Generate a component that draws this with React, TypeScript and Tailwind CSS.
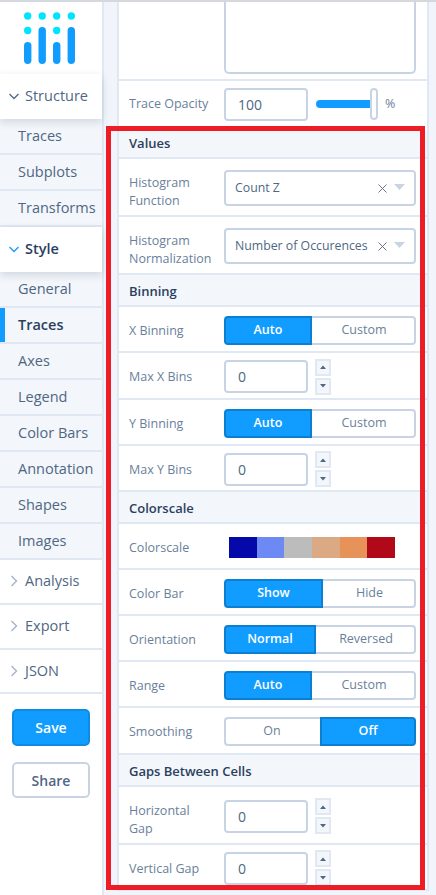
import React from "react";

const font = { fontFamily: '"Open Sans", sans-serif' };

function Chevron({ open, blue }: { open?: boolean; blue?: boolean }) {
  return (
    <svg width="12" height="12" viewBox="0 0 12 12" fill="none" className="shrink-0">
      {open ? (
        <path d="M1.5 4 L6 8.5 L10.5 4" stroke={blue ? "#119dff" : "#506784"} strokeWidth="1.3" />
      ) : (
        <path d="M3.5 1 L8.5 6 L3.5 11" stroke="#a2b1c6" strokeWidth="1.3" />
      )}
    </svg>
  );
}

function NavHead({ label, h, open, blue, shadow, up }: { label: string; h: string; open?: boolean; blue?: boolean; shadow?: boolean; up?: boolean }) {
  return (
    <div
      className={`flex items-center gap-[5px] pl-[8px] bg-white text-[14.5px] relative ${h} ${
        shadow ? "shadow-[0_3px_8px_rgba(80,103,132,0.22)] z-10 pb-[2px]" : "border-b-2 border-[#dfe8f3]"
      } ${up ? "pb-[2px]" : ""} ${blue ? "font-semibold text-[#2a3f5f]" : "text-[#506784]"}`}
    >
      <Chevron open={open} blue={blue} />
      <span>{label}</span>
    </div>
  );
}

function NavItem({ label, active }: { label: string; active?: boolean }) {
  return (
    <div
      className={`h-[36px] flex items-center pl-[18px] text-[14.5px] border-b-2 border-[#dfe8f3] relative ${
        active ? "font-semibold text-[#2a3f5f] bg-[#f3f6fa]" : "text-[#506784] bg-[#f3f6fa]"
      }`}
    >
      {active && <div className="absolute left-0 top-0 bottom-0 w-[5px] bg-[#119dff]" />}
      {label}
    </div>
  );
}

function Header({ label, first }: { label: string; first?: boolean }) {
  return (
    <div
      className={`flex items-center pl-[10px] bg-[#f3f6fa] border-b-2 border-[#dfe8f3] text-[13px] font-semibold text-[#2a3f5f] ${
        first ? "h-[28px]" : "h-[32px] pt-[4px]"
      }`}
    >
      {label}
    </div>
  );
}

function Row({ label, h = "h-[46px]", two, children }: { label: React.ReactNode; h?: string; two?: boolean; children: React.ReactNode }) {
  return (
    <div className={`${h} pt-[2px] flex items-center border-b-2 border-[#dfe8f3] bg-white`}>
      <div className={`w-[105px] pl-[10px] text-[12.5px] text-[#6a7f9b] shrink-0 ${two ? "leading-[18px] pt-[7px]" : "leading-[19px]"}`}>{label}</div>
      <div className="flex-1 flex items-center">{children}</div>
    </div>
  );
}

function Toggle({ left, right, leftW, active = "left" }: { left: string; right: string; leftW: string; active?: "left" | "right" }) {
  const on = "bg-[#119dff] text-white font-semibold border-[#0d7fd0]";
  const off = "bg-white text-[#6a7f9b] border-[#c8d4e3]";
  return (
    <div className="w-[192px] h-[29px] flex text-[12.5px]">
      <div className={`${leftW} flex items-center justify-center border-2 rounded-l-[4px] ${active === "left" ? on : off} ${active === "left" ? "" : "border-r-0 pr-[2px]"}`}>
        {left}
      </div>
      <div className={`flex-1 flex items-center justify-center border-2 rounded-r-[4px] ${active === "right" ? on : off} ${active === "right" ? "" : "border-l-0 pl-[2px]"}`}>
        {right}
      </div>
    </div>
  );
}

function Spin({ up }: { up?: boolean }) {
  return (
    <div className="w-[16px] h-[17px] bg-[#f3f6fa] border-2 border-[#dfe8f3] flex items-center justify-center">
      <svg width="6" height="4" viewBox="0 0 6 4">
        <path d={up ? "M0 4 L3 0.5 L6 4 Z" : "M0 0 L3 3.5 L6 0 Z"} fill="#506784" />
      </svg>
    </div>
  );
}

function NumberField() {
  return (
    <div className="flex items-center gap-[7px]">
      <div className="w-[84px] h-[33px] border-2 border-[#c8d4e3] rounded-[4px] bg-white flex items-center pl-[12px] text-[14px] text-[#506784]">0</div>
      <div className="flex flex-col gap-[2px]">
        <Spin up />
        <Spin />
      </div>
    </div>
  );
}

function Select({ value }: { value: string }) {
  return (
    <div className="w-[192px] h-[36px] border-2 border-[#c8d4e3] rounded-[4px] bg-white flex items-center pl-[9px] pr-[9px] text-[12.3px] text-[#506784]">
      <span className="flex-1 whitespace-nowrap">{value}</span>
      <svg width="9" height="9" viewBox="0 0 9 9" className="mr-[7px] shrink-0">
        <path d="M0.5 0.5 L8.5 8.5 M8.5 0.5 L0.5 8.5" stroke="#6b7686" strokeWidth="1" />
      </svg>
      <svg width="11" height="6" viewBox="0 0 11 6" className="mb-[2px] shrink-0">
        <path d="M0 0 H11 L5.5 6 Z" fill="#c8d4e3" />
      </svg>
    </div>
  );
}

const swatches = ["bg-[#0509aa]", "bg-[#6c89f4]", "bg-[#bcbcbc]", "bg-[#dbaa84]", "bg-[#e69259]", "bg-[#b2091a]"];

export default function App() {
  return (
    <div style={font} className="w-[436px] h-[895px] overflow-hidden relative flex bg-[#f1f5fb] border-t-2 border-[#d5d8dc]">
      {/* Sidebar */}
      <div className="w-[104px] shrink-0 bg-white border-r-2 border-[#dfe8f3] flex flex-col">
        <div className="h-[72px] flex justify-center items-start pt-[10px] bg-white">
          <svg width="54" height="54" viewBox="0 0 54 54">
            <g fill="#00e5ff">
              <circle cx="3.7" cy="4" r="3.7" />
              <circle cx="18.2" cy="4" r="3.7" />
              <circle cx="32.7" cy="4" r="3.7" />
              <circle cx="47.3" cy="4" r="3.7" />
              <circle cx="3.7" cy="18.5" r="3.7" />
              <circle cx="32.7" cy="18.5" r="3.7" />
            </g>
            <g fill="#119dff">
              <rect x="0" y="30" width="7.4" height="22" rx="3.7" />
              <rect x="14.5" y="15" width="7.4" height="37" rx="3.7" />
              <rect x="29" y="30" width="7.4" height="22" rx="3.7" />
              <rect x="43.6" y="15" width="7.4" height="37" rx="3.7" />
            </g>
          </svg>
        </div>
        <NavHead label="Structure" h="h-[45px]" open shadow />
        <NavItem label="Traces" />
        <NavItem label="Subplots" />
        <NavItem label="Transforms" />
        <NavHead label="Style" h="h-[45px]" open blue shadow />
        <NavItem label="General" />
        <NavItem label="Traces" active />
        <NavItem label="Axes" />
        <NavItem label="Legend" />
        <NavItem label="Color Bars" />
        <NavItem label="Annotation" />
        <NavItem label="Shapes" />
        <NavItem label="Images" />
        <NavHead label="Analysis" h="h-[45px]" up />
        <NavHead label="Export" h="h-[45px]" up />
        <NavHead label="JSON" h="h-[44px]" />
        <div className="pl-[12px] pt-[15px] flex flex-col gap-[16px]">
          <div className="w-[78px] h-[37px] rounded-[5px] bg-[#119dff] border-2 border-[#0d8ce6] text-white font-semibold text-[14px] flex items-center justify-center">Save</div>
          <div className="w-[78px] h-[36px] rounded-[5px] bg-white border-2 border-[#c8d4e3] text-[#506784] font-semibold text-[14px] flex items-center justify-center">Share</div>
        </div>
      </div>

      {/* Main */}
      <div className="flex-1 pl-[13px] pr-[7px]">
        <div className="w-[312px] border-x-2 border-[#dfe8f3] bg-white">
          <div className="h-[79px] border-b-2 border-[#dfe8f3] bg-white">
            <div className="ml-[105px] w-[192px] h-[72px] border-2 border-t-0 border-[#c8d4e3] rounded-b-[5px] bg-white" />
          </div>
          <div className="h-[50px] flex items-center bg-white">
            <div className="w-[105px] pl-[10px] text-[12.5px] text-[#6a7f9b] mb-[4px]">Trace Opacity</div>
            <div className="flex items-center mb-[4px]">
              <div className="w-[84px] h-[33px] border-2 border-[#c8d4e3] rounded-[4px] flex items-center pl-[12px] text-[14px] text-[#506784]">100</div>
              <div className="ml-[8px] w-[56px] h-[8px] rounded-l-full bg-[#119dff]" />
              <div className="-ml-[2px] w-[8px] h-[32px] rounded-full border-2 border-[#c8d4e3] bg-white" />
              <span className="ml-[7px] text-[12.5px] text-[#6a7f9b]">%</span>
            </div>
          </div>
          <Header label="Values" first />
          <Row label={<>Histogram<br />Function</>} h="h-[58px]" two><Select value="Count Z" /></Row>
          <Row label={<>Histogram<br />Normalization</>} h="h-[58px]" two><Select value="Number of Occurences" /></Row>
          <Header label="Binning" />
          <Row label="X Binning"><Toggle left="Auto" right="Custom" leftW="w-[88px]" /></Row>
          <Row label="Max X Bins" h="h-[47px]"><NumberField /></Row>
          <Row label="Y Binning"><Toggle left="Auto" right="Custom" leftW="w-[88px]" /></Row>
          <Row label="Max Y Bins"><NumberField /></Row>
          <Header label="Colorscale" />
          <Row label="Colorscale">
            <div className="ml-[5px] flex w-[166px] h-[21px]">
              {swatches.map((c) => (
                <div key={c} className={`flex-1 ${c}`} />
              ))}
            </div>
          </Row>
          <Row label="Color Bar"><Toggle left="Show" right="Hide" leftW="w-[99px]" /></Row>
          <Row label="Orientation"><Toggle left="Normal" right="Reversed" leftW="w-[92px]" /></Row>
          <Row label="Range"><Toggle left="Auto" right="Custom" leftW="w-[88px]" /></Row>
          <Row label="Smoothing" h="h-[47px]"><Toggle left="On" right="Off" leftW="w-[96px]" active="right" /></Row>
          <Header label="Gaps Between Cells" />
          <Row label={<>Horizontal<br />Gap</>} h="h-[58px]" two><NumberField /></Row>
          <Row label="Vertical Gap"><NumberField /></Row>
        </div>
      </div>

      {/* Highlight rectangle */}
      <div className="absolute left-[106px] top-[124px] w-[319px] h-[764px] border-[5px] border-[#ee1c25] pointer-events-none z-20" />
    </div>
  );
}
